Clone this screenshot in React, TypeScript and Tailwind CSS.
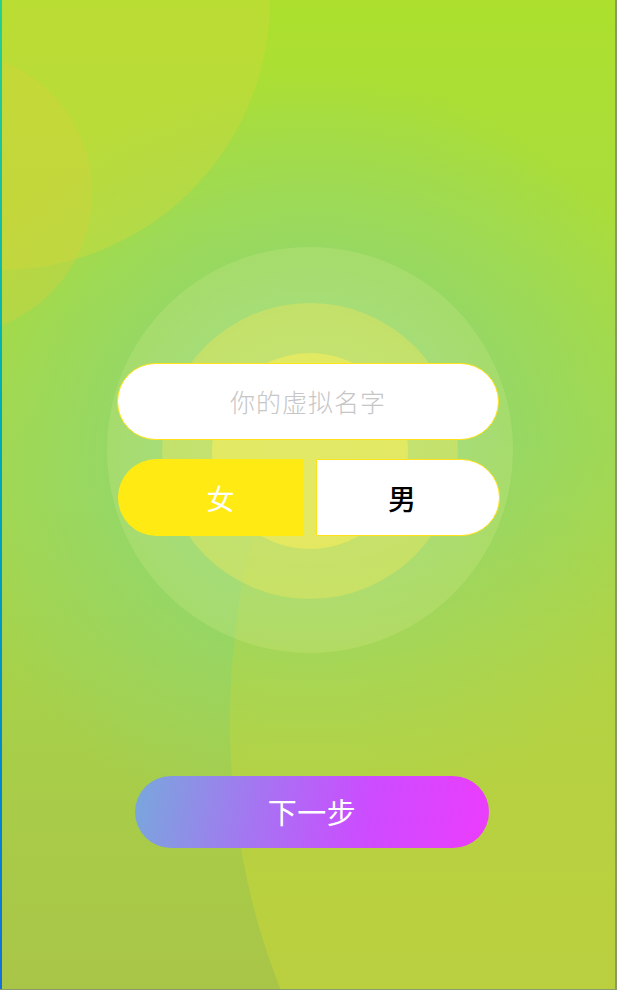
import React from 'react';

const font = { fontFamily: '"Noto Sans CJK SC", "Noto Sans", sans-serif' };

const Backdrop: React.FC = () => (
  <div className="absolute inset-0 overflow-hidden">
    <div className="absolute inset-0 bg-gradient-to-b from-[#ace02d] via-[#a6d84a] to-[#a9c548]" />
    <div className="absolute inset-0 bg-[radial-gradient(circle_at_310px_450px,rgba(150,220,150,0.9)_0px,rgba(145,215,110,0.75)_200px,rgba(170,220,60,0)_380px)]" />
    {/* decorative circles */}
    <div className="absolute left-[-270px] top-[-270px] w-[540px] h-[540px] rounded-full bg-[rgba(205,218,60,0.45)]" />
    <div className="absolute left-[-192px] top-[51px] w-[284px] h-[284px] rounded-full bg-[rgba(215,210,60,0.35)]" />
    <div className="absolute left-[230px] top-[160px] w-[820px] h-[1120px] rounded-[50%] bg-[linear-gradient(to_bottom,rgba(200,215,55,0)_25%,rgba(200,215,55,0.3)_45%,rgba(200,215,55,0.55)_65%)]" />
    {/* halo */}
    <div className="absolute left-[107px] top-[247px] w-[406px] h-[406px] rounded-full bg-[rgba(230,240,150,0.2)]" />
    <div className="absolute left-[162px] top-[303px] w-[296px] h-[296px] rounded-full bg-[rgba(235,232,90,0.42)]" />
    <div className="absolute left-[212px] top-[353px] w-[196px] h-[196px] rounded-full bg-[rgba(252,238,90,0.55)]" />
  </div>
);

export default function App() {
  return (
    <div className="relative flex w-[617px] h-[990px] overflow-hidden border-r-2 border-b border-[#8a9a70]" style={font}>
      <Backdrop />
      <div className="relative w-[2px] shrink-0 bg-gradient-to-b from-[#2ad08e] to-[#1470dc]" />
      <main className="relative flex flex-col flex-1 pt-[363px]">
        <div className="ml-[115px] w-[382px] h-[77px] rounded-full bg-white border border-[#ffe21a] flex items-center justify-center">
          <span className="text-[25px] font-light text-[#c6c6c6] tracking-[0.04em]">你的虚拟名字</span>
        </div>
        <div className="ml-[116px] mt-[19px] flex h-[77px]">
          <button className="w-[185px] h-full rounded-l-full bg-[#ffea14] text-white text-[28px] flex items-center justify-center pl-[20px]">
            女
          </button>
          <button className="ml-[13px] w-[184px] h-full rounded-r-full bg-white border border-[#ffe21a] text-black text-[28px] font-medium flex items-center justify-center pr-[12px]">
            男
          </button>
        </div>
        <button className="ml-[133px] mt-[240px] w-[354px] h-[72px] rounded-full bg-[linear-gradient(100deg,#78a8dc_0%,#a674f2_35%,#cc4cff_65%,#ec3cfc_100%)] text-white text-[29px] tracking-[0.02em] flex items-center justify-center">
          下一步
        </button>
      </main>
    </div>
  );
}
